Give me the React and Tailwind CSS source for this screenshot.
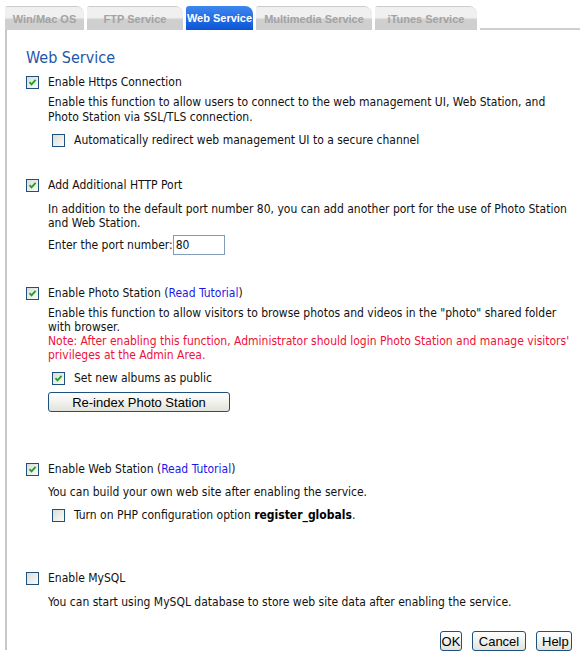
import React from 'react';

const tabs = [
  { label: 'Win/Mac OS', w: 'w-[79px]' },
  { label: 'FTP Service', w: 'w-[96px]' },
  { label: 'Web Service', w: 'w-[67px]', active: true },
  { label: 'Multimedia Service', w: 'w-[116px]' },
  { label: 'iTunes Service', w: 'w-[102px]' },
];

function Box({ checked }) {
  return (
    <span className="inline-flex h-[13px] w-[13px] shrink-0 items-center justify-center border border-[#1c5180] bg-gradient-to-br from-[#dcdcd7] to-[#fbfbf9]">
      {checked && (
        <svg width="9" height="9" viewBox="0 0 9 9">
          <path d="M1.5 4.2 L3.5 6.4 L7.6 1.8" fill="none" stroke="#21a121" strokeWidth="1.8" />
        </svg>
      )}
    </span>
  );
}

function Check({ checked, children, className = '' }) {
  return (
    <label className={`flex h-[16px] items-center gap-[9px] ${className}`}>
      <Box checked={checked} />
      <span>{children}</span>
    </label>
  );
}

function Btn({ children, className = '' }) {
  return (
    <button className={`h-[20px] rounded-[3px] border border-[#1c5180] bg-gradient-to-b from-white to-[#e3e3db] px-[5px] text-[13px] leading-none text-black font-['Liberation_Sans',sans-serif] ${className}`}>
      {children}
    </button>
  );
}

const Link = ({ children }) => <span className="text-[#1a1ae6]">{children}</span>;

export default function App() {
  return (
    <div className="h-[656px] w-[580px] overflow-hidden bg-white pt-[6px] font-['DejaVu_Sans_Condensed','DejaVu_Sans',sans-serif] text-[12px] leading-[14px] text-[#111]">
      <div className="flex h-[24px] items-end pl-[5px] font-['Liberation_Sans',sans-serif] text-[11px] font-bold whitespace-nowrap">
        {tabs.map((t) =>
          t.active ? (
            <div key={t.label} className={`mr-[3px] flex h-[24px] items-center justify-center rounded-tl-[3px] rounded-tr-[8px] bg-gradient-to-b from-[#3d86f0] to-[#0a55d6] text-white ${t.w}`}>
              {t.label}
            </div>
          ) : (
            <div
              key={t.label}
              className={`mr-[3px] flex h-[24px] items-center justify-center rounded-tl-[3px] rounded-tr-[8px] border-t border-dotted border-[#c8c8c8] bg-gradient-to-b from-[#f0f0f0] from-45% to-[#cfcfcf] to-55% text-[#a3a3a3] ${t.w}`}
            >
              {t.label}
            </div>
          )
        )}
        <div className="h-[2px] flex-1 bg-[#cfcfcf]" />
      </div>

      <div className="ml-[5px] h-[620px] border-l-2 border-[#c8c8c8] pl-[19px] pr-[6px]">
        <h1 className="pt-[18px] text-[16px] leading-[20px] text-[#1f56a8]">Web Service</h1>

        <Check checked className="mt-[6px]">Enable Https Connection</Check>
        <div className="ml-[22px] mt-[5px]">
          <p className="leading-[15px]">Enable this function to allow users to connect to the web management UI, Web Station, and Photo Station via SSL/TLS connection.</p>
          <Check className="ml-[4px] mt-[7px]">Automatically redirect web management UI to a secure channel</Check>
        </div>

        <Check checked className="mt-[29px]">Add Additional HTTP Port</Check>
        <div className="ml-[22px] mt-[9px]">
          <p>In addition to the default port number 80, you can add another port for the use of Photo Station and Web Station.</p>
          <div className="mt-[5px] flex h-[20px] items-center">
            <span>Enter the port number:</span>
            <input
              defaultValue="80"
              className="h-[20px] w-[52px] border border-[#7f9db9] px-[2px] text-[12px] outline-none"
            />
          </div>
        </div>

        <Check checked className="mt-[30px]">
          Enable Photo Station (<Link>Read Tutorial</Link>)
        </Check>
        <div className="ml-[22px] mt-[5px]">
          <p>Enable this function to allow visitors to browse photos and videos in the "photo" shared folder with browser.</p>
          <p className="text-[#f0103a]">Note: After enabling this function, Administrator should login Photo Station and manage visitors' privileges at the Admin Area.</p>
          <Check checked className="ml-[4px] mt-[8px]">Set new albums as public</Check>
          <Btn className="mt-[6px] w-[182px]">Re-index Photo Station</Btn>
        </div>

        <Check checked className="mt-[49px]">
          Enable Web Station (<Link>Read Tutorial</Link>)
        </Check>
        <div className="ml-[22px] mt-[8px]">
          <p>You can build your own web site after enabling the service.</p>
          <Check className="ml-[4px] mt-[8px]">
            Turn on PHP configuration option <b className="text-black">register_globals</b>.
          </Check>
        </div>

        <Check className="mt-[47px]">Enable MySQL</Check>
        <div className="ml-[22px] mt-[9px]">
          <p>You can start using MySQL database to store web site data after enabling the service.</p>
        </div>

        <div className="mt-[22px] flex justify-end gap-[10px] pr-[2px]">
          <Btn className="w-[22px] !px-0">OK</Btn>
          <Btn className="w-[54px]">Cancel</Btn>
          <Btn className="w-[36px]">Help</Btn>
        </div>
      </div>
    </div>
  );
}
